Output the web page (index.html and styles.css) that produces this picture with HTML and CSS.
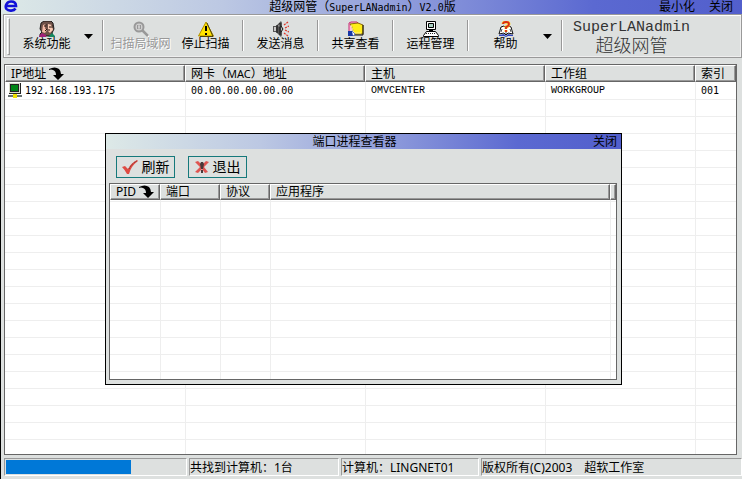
FILE: index.html
```html
<!DOCTYPE html>
<html lang="zh-CN">
<head>
    <meta charset="UTF-8">
    <meta name="viewport" content="width=device-width, initial-scale=1.0">
    <title>超级网管（SuperLANadmin）V2.0版</title>
    <link rel="stylesheet" href="styles.css">
</head>
<body>
    <div class="window">
        <header class="title-bar">
            <span class="app-icon">
                <svg width="14" height="12" viewBox="0 0 14 12"><path d="M11.5 8.5C10 11 4.500 11.500 2.500 9C.5 6 3 1.500 7 1.500C10.500 1.500 12 3.500 12 6H3" fill="none" stroke="#1010d8" stroke-width="2.600"/></svg>
            </span>
            <h1>超级网管（<span class="mono">SuperLANadmin</span>）<span class="mono">V2.0</span>版</h1>
            <div class="title-buttons">
                <button type="button">最小化</button>
                <button type="button">关闭</button>
            </div>
        </header>

        <nav class="toolbar">
            <span class="grip"></span>
            <button type="button" class="tool">
                <svg width="16" height="16" viewBox="0 0 16 16">
                    <path d="M1 15V13L3 11L1 8L2 2L5 0H12L14 2L15 8L13 12L14 15Z" fill="#6d5148" stroke="#000" stroke-width=".8"/>
                    <path d="M4 4L7 3L8 9L6 12L3 11Z" fill="#f4b9a4"/>
                    <path d="M9 3L13 4L14 9L11 12L9 10Z" fill="#f9c9b2"/>
                    <path d="M5 5H7M10 6H12M9 9H11M7 3V8M8 8L6 10M13 4V7" stroke="#21110d" fill="none"/>
                    <path d="M0 15L3 12L7 14V16H0Z" fill="#a02078"/>
                    <path d="M9 16L13 12L16 15V16Z" fill="#148860"/>
                </svg>
                系统功能
            </button>
            <button type="button" class="arrow" aria-label="系统功能菜单"><svg width="9" height="5" viewBox="0 0 9 5"><path d="M0 0H9L4.500 5Z"/></svg></button>
            <span class="divider"></span>
            <button type="button" class="tool" disabled>
                <svg width="16" height="16" viewBox="0 0 16 16">
                    <path d="M11 11L16 16" stroke="#fff" stroke-width="2"/>
                    <circle cx="6" cy="6" r="4.500" fill="#d0d0d0" stroke="#999" stroke-width="2"/>
                    <path d="M9 9L15 15" stroke="#999" stroke-width="2.500"/>
                    <path d="M4 4H8V8H4Z" fill="#999"/>
                    <path d="M5 6H7M6 4V8" stroke="#ddd"/>
                </svg>
                扫描局域网
            </button>
            <button type="button" class="tool">
                <svg width="16" height="16" viewBox="0 0 16 16">
                    <path d="M8 1L15.500 15H.5Z" fill="#ffe300" stroke="#b19000" stroke-linejoin="round"/>
                    <path d="M2 15.500H15L9 2" fill="none" stroke="#50430a"/>
                    <path d="M7 5H9V10H7ZM7 12H9V14H7Z" fill="#000"/>
                </svg>
                停止扫描
            </button>
            <span class="divider"></span>
            <button type="button" class="tool">
                <svg width="16" height="16" viewBox="0 0 16 16">
                    <path d="M0 5H3L8 0L9 2V14L8 16L3 11H0Z" fill="#555"/>
                    <path d="M1 6H3V10H1ZM5 5L7 3V6Z" fill="#c8c8c8"/>
                    <path d="M4 4V12M7 2V14" stroke="#111"/>
                    <path d="M8 5L10 8L8 11" fill="#bbb" stroke="#111"/>
                    <path d="M11 4L15 1M12 7L16 5M12 9L16 11M11 12L15 15" stroke="#e03a2c" stroke-width="1.300" stroke-dasharray="2 1"/>
                </svg>
                发送消息
            </button>
            <span class="divider"></span>
            <button type="button" class="tool">
                <svg width="16" height="16" viewBox="0 0 16 16">
                    <path d="M1 10V2L3 1H9L11 3V6" fill="#ffbbdc" stroke="#c32a72"/>
                    <path d="M2 3L10 2L15 4V13H6L4 6Z" fill="#ffed19" stroke="#8b6907"/>
                    <path d="M3 4L6 12H13" fill="none" stroke="#fff38c"/>
                    <path d="M15 4V14H6" fill="none" stroke="#111"/>
                    <path d="M0 10H5V15H0Z" fill="#1637a6"/>
                    <path d="M4 10L7 13L5 15" fill="#fff" stroke="#6480c4"/>
                </svg>
                共享查看
            </button>
            <span class="divider"></span>
            <button type="button" class="tool">
                <svg width="16" height="16" viewBox="0 0 16 16">
                    <path d="M3.500 .5H12.500V8.500H3.500Z" fill="#fff" stroke="#000"/>
                    <path d="M5.500 2.500H10.500V6.500H5.500Z" fill="#a9d1c2" stroke="#000"/>
                    <path d="M6 9.500H10M3.500 10.500H12.500L15.500 14.500V15.500H.5V14.500Z" fill="#fff" stroke="#000"/>
                    <path d="M3 12.500H13" stroke="#222" stroke-dasharray="1 1"/>
                </svg>
                运程管理
            </button>
            <span class="divider"></span>
            <button type="button" class="tool">
                <svg width="16" height="16" viewBox="0 0 16 16">
                    <path d="M1 14L6 13L8 15L10 13L15 14V15H10L8 16L6 15H1Z" fill="#3347bd"/>
                    <path d="M1 13L3 6L6 5L8 7L11 5L13 6L15 13L10 12L8 14L6 12Z" fill="#fff" stroke="#111"/>
                    <path d="M8 9V13M4 8L3 11M12 8L13 11" stroke="#555"/>
                    <path d="M5 3Q5 1 8 1T11 3Q11 5 8 6V8M8 9V11" fill="none" stroke="#ffd529" stroke-width="3"/>
                    <path d="M5 3Q5 1 8 1T11 3Q11 5 8 6V8M8 9V11" fill="none" stroke="#d92a18" stroke-width="1.800"/>
                </svg>
                帮助
            </button>
            <button type="button" class="arrow" aria-label="帮助菜单"><svg width="9" height="5" viewBox="0 0 9 5"><path d="M0 0H9L4.500 5Z"/></svg></button>
            <span class="divider"></span>
            <div class="brand">
                <span class="brand-en">SuperLANadmin</span>
                <span class="brand-cn">超级网管</span>
            </div>
        </nav>

        <main class="list hosts">
            <table>
                <colgroup>
                    <col class="col-ip"><col class="col-mac"><col class="col-host"><col class="col-group"><col class="col-index">
                </colgroup>
                <thead>
                    <tr>
                        <th>IP地址 <svg class="sort" width="15" height="13" viewBox="0 0 15 13"><path d="M0 2Q6-1 10 2Q12 4 12 7H15L9 13L4 8H7Q7 4 4 3Q2 2 0 3Z"/></svg></th>
                        <th>网卡（<span class="latin">MAC</span>）地址</th>
                        <th>主机</th>
                        <th>工作组</th>
                        <th>索引</th>
                    </tr>
                </thead>
                <tbody>
                    <tr>
                        <td>
                            <div class="ip-cell">
                                <svg width="14" height="15" viewBox="0 0 14 15" shape-rendering="crispEdges">
                                    <path d="M1 0H13V11H1Z" fill="#222"/><path d="M1 0H12V10H1Z" fill="#d8dcca"/>
                                    <path d="M2 1H11V9H2Z" fill="#222"/><path d="M3 2H10V8H3Z" fill="#008516"/>
                                    <path d="M6 11H8V12H6Z" fill="#555"/><path d="M0 12H14V14H0Z" fill="#687272"/>
                                    <path d="M5 11H9V15H5Z" fill="#eee000"/>
                                </svg>
                                192.168.193.175
                            </div>
                        </td>
                        <td>00.00.00.00.00.00</td>
                        <td class="name">OMVCENTER</td>
                        <td class="name">WORKGROUP</td>
                        <td>001</td>
                    </tr>
                    <tr class="filler"><td></td><td></td><td></td><td></td><td></td></tr>
                </tbody>
            </table>
        </main>

        <footer class="status-bar">
            <div class="panel panel-progress"><progress value="70" max="100" aria-label="扫描进度"></progress></div>
            <div class="panel panel-count">共找到计算机：1台</div>
            <div class="panel panel-computer">计算机：LINGNET01</div>
            <div class="panel panel-copyright"><span>版权所有(C)2003</span><span>超软工作室</span></div>
        </footer>

        <section class="dialog" role="dialog" aria-labelledby="dialogTitle">
            <header class="title-bar">
                <h2 id="dialogTitle">端口进程查看器</h2>
                <div class="title-buttons">
                    <button type="button">关闭</button>
                </div>
            </header>
            <div class="dialog-actions">
                <button type="button">
                    <svg width="16" height="14" viewBox="0 0 16 14"><path d="M0 7L3 6L6 9Q9 3 15 0L16 1Q9 6 7 14H5Q3 10 0 7Z" fill="#df4b43"/><path d="M7 9Q10 3 15 1" stroke="#713332" fill="none" stroke-dasharray="1 1"/></svg>
                    刷新
                </button>
                <button type="button">
                    <svg width="14" height="12" viewBox="0 0 14 12"><path d="M0 1L3 0L7 4L11 0L14 1L9 6L13 11L10 12L7 8L3 12L0 11L5 6Z" fill="#df5551"/><path d="M6 1H8L9 3L8 8H6L5 3ZM6 9H8V12H6Z" fill="#493839"/></svg>
                    退出
                </button>
            </div>
            <div class="list ports">
                <table>
                    <colgroup>
                        <col class="col-pid"><col class="col-port"><col class="col-protocol"><col class="col-app"><col class="col-end">
                    </colgroup>
                    <thead>
                        <tr>
                            <th>PID <svg class="sort" width="15" height="13" viewBox="0 0 15 13"><path d="M0 2Q6-1 10 2Q12 4 12 7H15L9 13L4 8H7Q7 4 4 3Q2 2 0 3Z"/></svg></th>
                            <th>端口</th>
                            <th>协议</th>
                            <th>应用程序</th>
                            <th></th>
                        </tr>
                    </thead>
                    <tbody>
                        <tr class="filler"><td></td><td></td><td></td><td></td><td></td></tr>
                    </tbody>
                </table>
            </div>
        </section>
    </div>
</body>
</html>
```
FILE: styles.css
```css
* {
    box-sizing: border-box;
}
body {
    margin: 0;
    font-family: "Noto Sans", "Noto Sans CJK SC", sans-serif;
    font-size: 12px;
    line-height: 14px;
    color: #000;
    background-color: #dde0df;
}
button {
    padding: 0;
    border: 0;
    background: none;
    font: inherit;
    color: inherit;
    white-space: nowrap;
}
svg {
    flex: none;
}
.window {
    position: relative;
    display: flex;
    flex-direction: column;
    height: 100vh;
    border-left: 1px solid #000;
}

/* title bars */
.title-bar {
    display: grid;
    grid-template-columns: 1fr auto 1fr;
    flex: none;
    height: 14px;
    background: linear-gradient(to right, #dde9e7, #bcc8e3 30%, #8e9bdb 55%, #5b69d1 80%, #525fcc);
}
.title-bar h1, .title-bar h2 {
    grid-column: 2;
    margin: 0;
    padding-right: 18px;
    font-size: 12px;
    font-weight: normal;
    line-height: 14px;
    white-space: nowrap;
}
.app-icon {
    display: flex;
    padding-left: 3px;
}
.title-buttons {
    grid-column: 3;
    display: flex;
    justify-content: flex-end;
    gap: 14px;
    padding-right: 9px;
}
.mono {
    font-family: "DejaVu Sans Mono", monospace;
    font-size: 10px;
    line-height: 10px;
}

/* toolbar */
.toolbar {
    display: flex;
    flex: none;
    height: 44px;
    margin-left: 2px;
    padding: 3px 0 2px 3px;
    border: 1px solid #999;
    box-shadow: inset 1px 1px #fff, inset -1px -1px #eee;
}
.grip {
    width: 3px;
    margin: 0 4px 0 0;
    border: 1px solid;
    border-color: #fff #999 #999 #fff;
}
.tool {
    display: flex;
    flex-direction: column;
    align-items: center;
    width: 65px;
    padding-top: 3px;
}
.tool:disabled {
    color: #999;
    text-shadow: 1px 1px #fff;
}
.arrow {
    width: 19px;
    padding-bottom: 4px;
}
.divider {
    width: 2px;
    margin: 2px 4px 4px;
    border-left: 1px solid #999;
    border-right: 1px solid #fff;
}
.brand {
    display: flex;
    flex-direction: column;
    align-items: center;
    padding: 2px 0 0 6px;
    color: #333;
}
.brand-en {
    font-family: "Liberation Mono", monospace;
    font-size: 15px;
    line-height: 16px;
}
.brand-cn {
    font-size: 18px;
    font-weight: 300;
    line-height: 18px;
}

/* lists */
.list {
    flex: 1;
    min-height: 0;
    overflow: hidden;
    border: 1px solid #666;
    background-color: #fff;
}
.list table {
    width: 100%;
    height: 100%;
    table-layout: fixed;
    border-collapse: separate;
    border-spacing: 0;
}
.list th {
    height: 16px;
    padding: 0 5px;
    border: 1px solid;
    border-color: #fff #666 #666 #fff;
    box-shadow: inset -1px -1px #999;
    background-color: #dde0df;
    font-weight: normal;
    line-height: 14px;
    text-align: left;
    white-space: nowrap;
}
.list td {
    height: 18px;
    padding: 0 5px;
    border-left: 1px solid #eee;
    border-bottom: 1px solid #eee;
    font-family: "DejaVu Sans Mono", monospace;
    font-size: 10px;
    line-height: 17px;
    white-space: nowrap;
}
.list td:first-child {
    padding: 0 3px;
    border-left: 0;
}
.list .name {
    font-family: "Liberation Mono", monospace;
}
.list .filler td {
    height: auto;
    border-bottom: 0;
    background: repeating-linear-gradient(#fff 0 16px, #eee 16px 17px);
}
.sort {
    vertical-align: -2px;
}
.latin {
    font-size: 11px;
}
.hosts {
    margin: 6px 5px 0 3px;
}
.hosts th {
    height: 17px;
    line-height: 15px;
}
.ip-cell {
    display: flex;
    align-items: center;
    gap: 3px;
}
.col-ip, .col-mac, .col-host {
    width: 180px;
}
.col-group {
    width: 150px;
}

/* status bar */
.status-bar {
    display: flex;
    flex: none;
    gap: 2px;
    padding: 3px 0 3px 3px;
}
.panel {
    height: 18px;
    border: 1px solid;
    border-color: #999 #fff #fff #999;
    line-height: 17px;
    white-space: nowrap;
}
.panel-progress {
    width: 183px;
    padding: 0 1px;
}
.panel-count {
    width: 150px;
}
.panel-computer {
    width: 138px;
}
.panel-copyright {
    display: flex;
    flex: 1;
    gap: 12px;
}
progress {
    display: block;
    width: 100%;
    height: 14px;
    margin-top: 1px;
    appearance: none;
}
progress::-webkit-progress-bar {
    background-color: #dde0df;
}
progress::-webkit-progress-value {
    background-color: #0078d7;
}

/* port viewer */
.dialog {
    position: absolute;
    top: 133px;
    left: 104px;
    display: flex;
    flex-direction: column;
    width: 517px;
    height: 252px;
    border: 1px solid #000;
    background-color: #dde0df;
}
.dialog .title-bar {
    height: 15px;
}
.dialog .title-bar h2 {
    line-height: 15px;
}
.dialog .title-buttons {
    padding-right: 4px;
}
.dialog-actions {
    display: flex;
    gap: 13px;
    padding: 7px 10px 5px;
}
.dialog-actions button {
    display: flex;
    align-items: center;
    justify-content: center;
    gap: 4px;
    width: 59px;
    height: 22px;
    border: 1px solid #16797b;
    font-size: 14px;
}
.ports {
    margin: 0 4px 4px 3px;
}
.ports .filler td {
    background-position-y: 2px;
    background-size: 100% 17px;
}
.col-pid {
    width: 50px;
}
.col-port {
    width: 60px;
}
.col-protocol {
    width: 50px;
}
.col-app {
    width: 340px;
}
```
